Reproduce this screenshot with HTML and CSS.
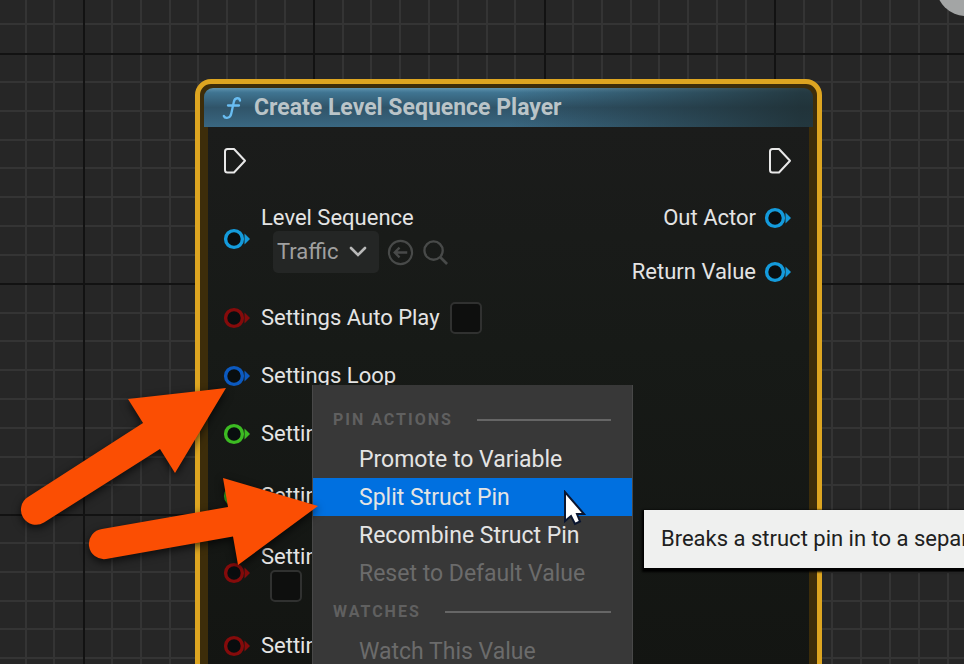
FILE: index.html
```html
<!DOCTYPE html>
<html lang="en">
<head>
<meta charset="utf-8">
<title>Blueprint Graph</title>
<link rel="stylesheet" href="styles.css">
</head>
<body>
<svg class="defs" aria-hidden="true">
  <defs>
    <symbol id="pin" viewBox="0 0 28 24">
      <circle cx="11" cy="12" r="8.4" fill="#050b0e" fill-opacity=".75" stroke="currentColor" stroke-width="3.4"/>
      <path d="M21.500 6.500 L27 12 L21.500 17.500 Z" fill="currentColor"/>
    </symbol>
    <symbol id="exec" viewBox="0 0 24 28">
      <path d="M4.500 2 H11 L22 13.800 L11 25.500 H4.500 Q2 25.500 2 23 V4.500 Q2 2 4.500 2 Z" fill="none" stroke="currentColor" stroke-width="2" stroke-linejoin="round"/>
    </symbol>
  </defs>
</svg>
<main class="graph">
  <svg class="grid" aria-hidden="true">
    <defs>
      <pattern id="lines" x="83" y="53" width="461" height="461" patternUnits="userSpaceOnUse">
        <path class="minor" d="M29 0V461M58 0V461M87 0V461M115 0V461M144 0V461M173 0V461M202 0V461M260 0V461M288 0V461M317 0V461M346 0V461M375 0V461M404 0V461M432 0V461M0 29H461M0 58H461M0 87H461M0 115H461M0 144H461M0 173H461M0 202H461M0 260H461M0 288H461M0 317H461M0 346H461M0 375H461M0 404H461M0 432H461"/>
        <path class="major" d="M1 0V461M231 0V461M0 1H461M0 231H461"/>
      </pattern>
    </defs>
    <rect width="100%" height="100%" fill="url(#lines)"/>
  </svg>
  <div class="corner-badge"></div>

  <section class="node">
    <header class="node-header">
      <svg class="fn-icon" viewBox="0 0 20 24" aria-hidden="true"><path d="M18 4.500 C17.500 1.500 12.800 1 11.800 6 L9.300 17.500 C8.300 22.500 3 23 1.800 20 M6 9.500 H17" fill="none" stroke="#69bdf2" stroke-width="2.300" stroke-linecap="round"/></svg>
      <h1>Create Level Sequence Player</h1>
    </header>
    <div class="node-body">
      <div class="inputs">
        <div class="row exec-row"><svg class="exec"><use href="#exec"/></svg></div>
        <div class="row asset-row">
          <svg class="pin object"><use href="#pin"/></svg>
          <div class="stack">
            <label for="seq">Level Sequence</label>
            <div class="asset">
              <div class="combo">
                <select id="seq"><option>Traffic</option></select>
                <svg class="chevron" viewBox="0 0 18 12" aria-hidden="true"><path d="M2 2 L9 9 L16 2" fill="none" stroke="#b9b9b9" stroke-width="2.600" stroke-linecap="round"/></svg>
              </div>
              <button class="icon" aria-label="Use selected asset"><svg viewBox="0 0 28 28"><circle cx="14" cy="14" r="12" fill="none" stroke="currentColor" stroke-width="2.200"/><path d="M21 14H8M13 9L8 14L13 19" fill="none" stroke="currentColor" stroke-width="2.400"/></svg></button>
              <button class="icon" aria-label="Browse to asset"><svg viewBox="0 0 28 28"><circle cx="12" cy="12" r="9.500" fill="none" stroke="currentColor" stroke-width="2.400"/><path d="M19 19L26 26" stroke="currentColor" stroke-width="2.800"/></svg></button>
            </div>
          </div>
        </div>
        <div class="row"><svg class="pin bool"><use href="#pin"/></svg><label for="auto">Settings Auto Play</label><input type="checkbox" id="auto"></div>
        <div class="row"><svg class="pin struct"><use href="#pin"/></svg><span>Settings Loop</span></div>
        <div class="row"><svg class="pin float"><use href="#pin"/></svg><span>Settings</span></div>
        <div class="row tall"><svg class="pin float"><use href="#pin"/></svg><span>Settings</span></div>
        <div class="row check-row"><svg class="pin bool"><use href="#pin"/></svg>
          <div class="stack"><label for="opt">Settings</label><input type="checkbox" id="opt"></div></div>
        <div class="row"><svg class="pin bool"><use href="#pin"/></svg><span>Settings</span></div>
      </div>
      <div class="outputs">
        <div class="row exec-row"><svg class="exec"><use href="#exec"/></svg></div>
        <div class="row out"><span>Out Actor</span><svg class="pin object"><use href="#pin"/></svg></div>
        <div class="row out"><span>Return Value</span><svg class="pin object"><use href="#pin"/></svg></div>
      </div>
    </div>
  </section>

  <div class="menu">
    <h2>PIN ACTIONS</h2>
    <button>Promote to Variable</button>
    <button class="active">Split Struct Pin</button>
    <button>Recombine Struct Pin</button>
    <button disabled>Reset to Default Value</button>
    <h2>WATCHES</h2>
    <button disabled>Watch This Value</button>
  </div>

  <div class="tooltip" role="tooltip">Breaks a struct pin in to a separ</div>

  <svg class="cursor" viewBox="0 0 24 36" aria-hidden="true"><path d="M2 2 V31 L8 26 L12 34 L17 31.500 L14 24 H21 Z" fill="#fff" stroke="#0b1630" stroke-width="2"/></svg>

  <svg class="arrows" viewBox="0 0 340 220" aria-hidden="true">
    <path d="M28 127 L143 53 L128 29 L226 18 L175 103 L160 79 L44 152.500 A15 15 0 0 1 28 127 Z"/>
    <path d="M102 159 L228 137 L223 108 L318 136 L238 195 L233 166.500 L106 189 A15 15 0 0 1 102 159 Z"/>
  </svg>
</main>
</body>
</html>
```
FILE: styles.css
```css
* { box-sizing: border-box; }
body {
  margin: 0;
  background: #262626;
  font-family: Roboto, "Liberation Sans", sans-serif;
  font-size: 22px;
  line-height: 26px;
  color: #e4e4e4;
}
button, select { font: inherit; color: inherit; border: 0; background: none; padding: 0; margin: 0; }
.defs { position: absolute; width: 0; height: 0; }
.graph { position: relative; height: 100vh; overflow: hidden; }
.grid { display: block; width: 100%; height: 100%; }
.minor { stroke: #343434; stroke-width: 2; fill: none; }
.major { stroke: #121212; stroke-width: 2; fill: none; }
.corner-badge {
  position: absolute; right: -32px; top: -44px;
  width: 60px; height: 60px; border-radius: 50%;
  background: #a3a5a5;
}

/* Graph node */
.node {
  position: absolute; left: 195px; top: 79px;
  width: 627px;
  border: 5px solid #dda521;
  border-radius: 16px;
  padding: 4px 4px 16px;
  background: #3d2d0a;
}
.node-header {
  display: flex; align-items: center; gap: 12px;
  height: 39px; padding-left: 18px;
  border-radius: 9px 9px 0 0;
  background:
    linear-gradient(90deg, transparent 50%, #1d2b2ecc 98%),
    linear-gradient(#5c91ae 0, #3f7491 12%, #305469 50%, #3a6781 100%);
}
.fn-icon { width: 20px; height: 24px; }
.node-header h1 { margin: 0; font-size: 23px; line-height: 26px; font-weight: 700; color: #bac4c8; }
.node-body {
  display: flex; justify-content: space-between;
  margin: 0 4px; padding: 0 17px 0 15px;
  background: linear-gradient(#1b1c1b, #171a17 40%, #131512);
}
.row { display: flex; align-items: center; gap: 10px; min-height: 58px; }
.exec-row { min-height: 68px; }
.outputs .exec-row { justify-content: flex-end; }
.asset-row { min-height: 88px; margin-bottom: 6px; }
.tall { min-height: 66px; }
.check-row { min-height: 88px; }
.out { min-height: 54px; justify-content: flex-end; gap: 8px; }
.outputs .out:nth-child(2) { margin-top: -4px; }
.exec { width: 24px; height: 28px; color: #e8e8e8; }
.pin { width: 28px; height: 24px; flex: none; }
.object { color: #149bdc; }
.bool { color: #850b0b; }
.struct { color: #0c5ac0; }
.float { color: #3cbb22; }
.stack { display: flex; flex-direction: column; }
.asset { display: flex; align-items: center; gap: 8px; margin-left: 12px; }
.combo {
  display: flex; align-items: center; gap: 10px;
  height: 42px; padding: 0 12px 0 4px;
  border-radius: 5px; background: #242625;
  color: #a0a0a0;
}
select { appearance: none; }
.chevron { width: 18px; height: 12px; }
.icon { width: 27px; height: 27px; color: #484a49; }
.icon svg { display: block; width: 100%; height: 100%; }
input[type="checkbox"] {
  appearance: none; width: 32px; height: 32px; margin: 0;
  border: 2px solid #303130; border-radius: 5px; background: #0e0f0e;
}
.stack input[type="checkbox"] { margin-left: 9px; }

/* Context menu */
.menu {
  position: absolute; left: 312px; top: 385px;
  width: 321px; padding-top: 15px;
  background: #383838; border: solid #484848; border-width: 0 1px;
}
.menu h2 {
  display: flex; align-items: center; gap: 24px;
  height: 40px; margin: 0; padding: 0 21px 0 20px;
  font-size: 16px; font-weight: 700; letter-spacing: 2px; color: #606060;
}
.menu h2::after { content: ""; flex: 1; height: 2px; background: #666; }
.menu button { display: block; width: 100%; height: 38px; padding: 2px 0 0 46px; text-align: left; font-size: 23px; }
.menu button.active { background: #0070e0; }
.menu button:disabled { color: #6b6b6b; }

.tooltip {
  position: absolute; left: 644px; top: 510px;
  min-width: 340px;
  padding: 16px 17px; white-space: nowrap;
  background: #eff0ef; color: #202020;
  box-shadow: 0 2px 2px 2px #000;
}
.cursor { position: absolute; left: 563px; top: 490px; width: 24px; height: 36px; }
.arrows {
  position: absolute; left: 0; top: 370px; width: 340px; height: 220px;
  fill: #fb4e03; filter: drop-shadow(0 3px 4px #000000b0);
}
```
